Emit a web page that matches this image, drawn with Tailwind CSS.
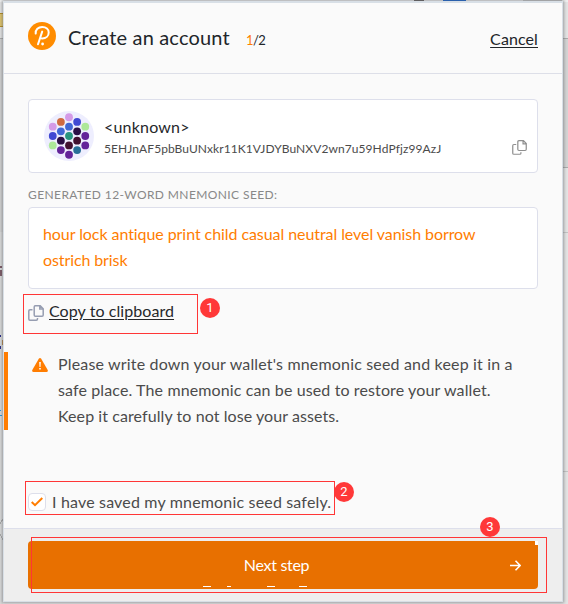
<!DOCTYPE html>
<html lang="en">
<head>
<meta charset="utf-8">
<title>Create an account</title>
<script src="https://cdn.jsdelivr.net/npm/@tailwindcss/browser@4"></script>
</head>
<body class="relative h-[604px] w-[568px] overflow-hidden bg-[#e4e4e4] font-['Lato',sans-serif] text-[16px] text-[#4b4b4b]">
<!-- page behind the popup -->
<svg class="absolute inset-0" width="568" height="604" viewBox="0 0 568 604" shape-rendering="crispEdges">
  <path fill="#f0f0f0" d="M0 0h568v2H0z"/><path fill="#c8c8c8" d="M523 0h39v2h-39z"/><path fill="#686462" d="M414 0h10v1h-10z"/><path fill="#1967d2" d="M443 0h23v1h-23z"/>
  <path fill="#d1d1d1" d="M0 38h3v194H0z"/><path fill="#dadada" d="M0 232h3v372H0z"/><path fill="#aaa" d="M0 38h3v1H0zM563 38h5v1h-5zM563 167h5v1h-5z"/>
  <path fill="#dfc36c" d="M0 14h3v12H0z"/><path fill="#b38b20" d="M0 13h3v1H0zM0 26h3v1H0z"/>
  <path fill="#d4d4d4" d="M563 39h5v128h-5z"/><path fill="#c4c4c4" d="M563 232h5v1h-5zM563 471h5v1h-5z"/>
  <path fill="#7b5965" d="M0 266h2v2H0zM0 270h2v6H0z"/><path fill="#242888" d="M0 335h1v2H0zM0 346h1v3H0z"/><path fill="#b98648" d="M2 340h1v5H2z"/><path fill="#2896dc" d="M0 410h1v1H0zM0 415h2v1H0z"/><path stroke="#aaa" fill="none" d="M0 524l3-5M0 534l3 6"/>
</svg>
<main class="relative mt-px ml-[3px] flex h-[601px] w-[560px] flex-col border border-t-2 border-[#d8dfe6] bg-[#fafafa] shadow-[0_0_3px_1px_rgba(80,85,90,0.5)]">
  <header class="flex h-[71px] shrink-0 items-center border-b border-[#dddfe8] pr-[24px] pl-[24px] text-[#212529]">
    <svg class="-mt-[4px] shrink-0" width="28" height="28" viewBox="0 0 28 28"><circle cx="14" cy="14" r="14" fill="#ff8c00"/><path d="M7.7 11.6C7.3 7.8 10.3 4.9 14.2 4.9c3.9 0 6.5 2.3 6.5 5.6 0 3.6-2.8 5.9-6.4 5.9l-1.4-.1M14.2 9.6L10 22.2" fill="none" stroke="#fff" stroke-width="2" stroke-linecap="round"/><circle cx="14.6" cy="22" r="1.4" fill="#fff"/></svg>
    <h1 class="-mt-[2px] ml-[12px] w-[178px] whitespace-nowrap text-[20px] tracking-[0.17px]">Create an account</h1>
    <span class="mt-[5px] text-[13px] tracking-[-0.6px]"><span class="text-[#ff7d01]">1</span>/2</span>
    <a class="mt-px ml-auto text-[16px] tracking-[0.1px] underline underline-offset-2">Cancel</a>
  </header>
  <section class="flex flex-1 flex-col px-[24px] pt-[25px]">
    <div class="flex h-[74px] shrink-0 rounded-[4px] border border-[#dddfeb] bg-white pt-[11px] pr-[10px] pl-[15px]">
      <svg class="shrink-0" width="50" height="50" viewBox="0 0 64 64"><circle cx="32" cy="32" r="32" fill="#eeeefe"/>
        <g fill="#d49ae7"><circle cx="32" cy="8" r="5"/><circle cx="11.2" cy="20" r="5"/></g>
        <g fill="#ade899"><circle cx="52.8" cy="20" r="5"/><circle cx="11.2" cy="44" r="5"/></g>
        <g fill="#4049d3"><circle cx="42.4" cy="14" r="5"/><circle cx="11.2" cy="32" r="5"/></g>
        <g fill="#4168d5"><circle cx="32" cy="20" r="5"/><circle cx="21.6" cy="26" r="5"/></g>
        <g fill="#2b1045"><circle cx="42.4" cy="26" r="5"/><circle cx="21.6" cy="38" r="5"/></g>
        <g fill="#421130"><circle cx="42.4" cy="38" r="5"/><circle cx="32" cy="44" r="5"/></g>
        <g fill="#632399"><circle cx="52.8" cy="32" r="5"/><circle cx="21.6" cy="50" r="5"/><circle cx="52.8" cy="44" r="5"/><circle cx="32" cy="56" r="5"/></g>
        <circle cx="21.6" cy="14" r="5" fill="#d06a41"/><circle cx="32" cy="32" r="5" fill="#27957e"/><circle cx="42.4" cy="50" r="5" fill="#276e98"/>
      </svg>
      <div class="ml-[10px] whitespace-nowrap">
        <div class="mt-[3px] h-[26px] text-[16px] leading-[26px] tracking-[0.2px] text-[#26282b]">&lt;unknown&gt;</div>
        <div class="text-[12px] leading-[18px] tracking-[0.08px]">5EHJnAF5pbBuUNxkr11K1VJDYBuNXV2wn7u59HdPfjz99AzJ</div>
      </div>
      <svg class="mt-[29px] ml-auto" width="15" height="15" viewBox="0 0 16 16" fill="none" stroke="#8f8f8f" stroke-width="1.3"><path d="M6.2 2c0-.8.4-1.3 1.2-1.3h4.8l3 3v6.2c0 .8-.4 1.3-1.2 1.3H7.4c-.8 0-1.2-.5-1.2-1.3zM11.8.8v3.3h3.3M4.5 4.8H2C1.2 4.8.8 5.3.8 6v8c0 .8.4 1.2 1.2 1.2h6.3c.8 0 1.2-.4 1.2-1.2v-1"/></svg>
    </div>
    <div class="mt-[14px] h-[20px] text-[12px] leading-[16px] tracking-[0.4px] text-[#888]">GENERATED 12-WORD MNEMONIC SEED:</div>
    <div class="h-[82px] shrink-0 rounded-[4px] border border-[#dddfeb] bg-white px-[14px] py-[13px] leading-[26px] tracking-[-0.07px] text-[#ff7d01]">hour lock antique print child casual neutral level vanish borrow<br><span class="tracking-[-0.1px]">ostrich brisk</span></div>
    <div class="relative mt-[5px] -ml-[5px] flex h-[40px] w-[175px] shrink-0 items-center border border-[#ff3636] pl-[4px] text-[#26282b]">
      <svg class="mt-[-2px]" width="16" height="16" viewBox="0 0 16 16" fill="none" stroke="#969db1" stroke-width="1.5"><path d="M6.2 2c0-.8.4-1.3 1.2-1.3h4.8l3 3v6.2c0 .8-.4 1.3-1.2 1.3H7.4c-.8 0-1.2-.5-1.2-1.3zM11.8.8v3.3h3.3M4.5 4.8H2C1.2 4.8.8 5.3.8 6v8c0 .8.4 1.2 1.2 1.2h6.3c.8 0 1.2-.4 1.2-1.2v-1"/></svg>
      <span class="-mt-[6px] ml-[5px] whitespace-nowrap tracking-[0.07px] underline underline-offset-2">Copy to clipboard</span>
      <b class="absolute top-[3px] left-[176px] flex size-5 items-center justify-center rounded-full bg-[#ff3838] font-['Roboto'] text-[13px] font-normal text-white">1</b>
    </div>
    <div class="mt-[18px] -ml-[24px] flex h-[78px] shrink-0 border-l-4 border-[#ff7d01] pl-[24px] leading-[26px]">
      <svg class="mt-[6px] shrink-0" width="16" height="14" viewBox="0 0 16 14"><path fill="#ff7d01" d="M6.8.8Q8-.8 9.2.8l6.5 11.1Q16.3 14 14.5 14h-13Q-.3 14 .3 11.9z"/><path fill="#fff" d="M7.2 4h1.6l-.3 5h-1zM7.2 10h1.6v1.6H7.2z"/></svg>
      <p class="-mt-px ml-[10px] whitespace-nowrap tracking-[0.17px]">Please write down your wallet's mnemonic seed and keep it in a<br><span class="tracking-[0.12px]">safe place. The mnemonic can be used to restore your wallet.</span><br><span class="tracking-[0.08px]">Keep it carefully to not lose your assets.</span></p>
    </div>
    <div class="relative mt-[51px] -ml-[3px] flex h-[34px] w-[310px] shrink-0 items-center border border-[#ff3636] pl-[2px]">
      <span class="mt-[8px] flex size-[18px] shrink-0 items-center justify-center rounded-[4px] border border-[#dddfeb] bg-white"><svg width="12" height="10" viewBox="0 0 12 10" fill="none" stroke="#ff7d01" stroke-width="2"><path d="M.7 5l3.3 3.2L11.3 1"/></svg></span>
      <span class="mt-[8px] ml-[6px] whitespace-nowrap tracking-[0.17px]">I have saved my mnemonic seed safely.</span>
      <b class="absolute top-0 left-[308px] flex size-5 items-center justify-center rounded-full bg-[#ff3838] font-['Roboto'] text-[13px] font-normal text-white">2</b>
    </div>
  </section>
  <footer class="relative h-[73px] shrink-0 border-t border-[#dddfeb] bg-[#eee] px-[24px] pt-[12px]">
    <button class="relative flex h-[48px] w-[510px] items-center justify-center rounded-[4px] bg-[#e87000] pr-[13px] pb-px text-[16px] tracking-[-0.3px] text-white">Next step
      <svg class="absolute top-[19px] right-[17px]" width="11" height="11" viewBox="0 0 11 11" fill="none" stroke="#fff" stroke-width="1.6"><path d="M0 5.5h10M5.5.8l4.7 4.7-4.7 4.7"/></svg>
      <svg class="absolute inset-0" width="510" height="48" shape-rendering="crispEdges"><path fill="#fff" d="M175 45h8v1h-8zM199 45h4v1h-4zM239 45h8v1h-8zM271 45h8v1h-8zM507 0h3v4h-3z"/></svg>
    </button>
    <div class="absolute top-[8px] left-[27px] h-[56px] w-[516px] border border-[#ff3636]"></div>
    <b class="absolute -top-[12px] left-[476px] flex size-5 items-center justify-center rounded-full bg-[#ff3838] font-['Roboto'] text-[13px] font-normal text-white">3</b>
  </footer>
</main>
</body>
</html>
